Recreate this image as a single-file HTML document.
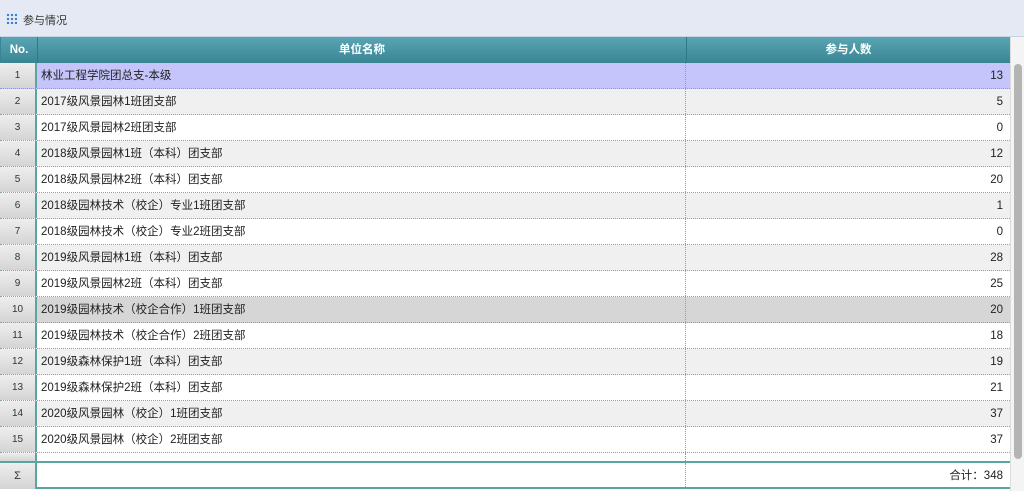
<!DOCTYPE html>
<html><head><meta charset="utf-8"><style>
*{margin:0;padding:0;box-sizing:border-box}
body{width:1024px;height:491px;overflow:hidden;background:#fff;font-family:"Liberation Sans","Noto Sans CJK SC",sans-serif;font-size:11.5px;color:#222;position:relative}
.top{position:absolute;left:0;top:0;width:1024px;height:37px;background:#e4e9f3;border-bottom:1px solid #c8d4e4}
.top .t{position:absolute;left:23px;top:12px;font-size:11px;color:#333}
.top .ic{position:absolute;left:6px;top:13px;width:11px;height:11px;background:
radial-gradient(circle,#3a7fd0 1.2px,transparent 1.3px) 0 0/4px 4px}
.hd{position:absolute;top:37px;left:0;width:1010px;height:26px;background:linear-gradient(#5aa5b4,#3a8594);color:#fff;font-weight:bold;border-left:1px solid #3a8594}
.hd div{position:absolute;top:0;height:26px;line-height:26px;text-align:center;border-right:1px solid #2e7888}
.row{position:absolute;left:0;width:1010px;height:26px;border-bottom:1px dotted #7aa8b0}
.row div{position:absolute;top:0;height:25px;line-height:26px;white-space:nowrap}
.n{left:0;width:37px;text-align:center;font-size:10px;color:#333;background:linear-gradient(#eee,#d4d4d4);border-right:2px solid #5aa5a0}
.c1{left:37px;width:649px;padding-left:4px;border-right:1px dotted #7aa8b0}
.c2{left:686px;width:324px;text-align:right;padding-right:7px}
.sb{position:absolute;left:1010px;top:37px;width:14px;height:454px;background:#f4f4f4;border-left:1px solid #ddd}
.th{position:absolute;left:1014px;top:64px;width:8px;height:395px;background:#b4b4b4;border-radius:4px}
.ft{position:absolute;left:0;top:461px;width:1010px;height:28px;border-top:2px solid #5aa5a0;border-bottom:2px solid #5aa5a0}
.ft div{position:absolute;top:0;height:26px;line-height:26px}
</style></head><body>
<div class="top"><span class="ic"></span><span class="t">参与情况</span></div>
<div class="hd"><div style="left:0;width:37px">No.</div><div style="left:37px;width:649px">单位名称</div><div style="left:686px;width:323px;border-right:none">参与人数</div></div>
<div class="row" style="top:63px;background:#c5c5fb"><div class="n">1</div><div class="c1">林业工程学院团总支-本级</div><div class="c2">13</div></div>
<div class="row" style="top:89px;background:#f0f0f0"><div class="n">2</div><div class="c1">2017级风景园林1班团支部</div><div class="c2">5</div></div>
<div class="row" style="top:115px"><div class="n">3</div><div class="c1">2017级风景园林2班团支部</div><div class="c2">0</div></div>
<div class="row" style="top:141px;background:#f0f0f0"><div class="n">4</div><div class="c1">2018级风景园林1班（本科）团支部</div><div class="c2">12</div></div>
<div class="row" style="top:167px"><div class="n">5</div><div class="c1">2018级风景园林2班（本科）团支部</div><div class="c2">20</div></div>
<div class="row" style="top:193px;background:#f0f0f0"><div class="n">6</div><div class="c1">2018级园林技术（校企）专业1班团支部</div><div class="c2">1</div></div>
<div class="row" style="top:219px"><div class="n">7</div><div class="c1">2018级园林技术（校企）专业2班团支部</div><div class="c2">0</div></div>
<div class="row" style="top:245px;background:#f0f0f0"><div class="n">8</div><div class="c1">2019级风景园林1班（本科）团支部</div><div class="c2">28</div></div>
<div class="row" style="top:271px"><div class="n">9</div><div class="c1">2019级风景园林2班（本科）团支部</div><div class="c2">25</div></div>
<div class="row" style="top:297px;background:#d6d6d6"><div class="n">10</div><div class="c1">2019级园林技术（校企合作）1班团支部</div><div class="c2">20</div></div>
<div class="row" style="top:323px"><div class="n">11</div><div class="c1">2019级园林技术（校企合作）2班团支部</div><div class="c2">18</div></div>
<div class="row" style="top:349px;background:#f0f0f0"><div class="n">12</div><div class="c1">2019级森林保护1班（本科）团支部</div><div class="c2">19</div></div>
<div class="row" style="top:375px"><div class="n">13</div><div class="c1">2019级森林保护2班（本科）团支部</div><div class="c2">21</div></div>
<div class="row" style="top:401px;background:#f0f0f0"><div class="n">14</div><div class="c1">2020级风景园林（校企）1班团支部</div><div class="c2">37</div></div>
<div class="row" style="top:427px"><div class="n">15</div><div class="c1">2020级风景园林（校企）2班团支部</div><div class="c2">37</div></div>
<div class="row" style="top:453px;height:8px;border:none"><div class="n" style="height:8px"></div><div class="c1" style="height:8px"></div></div>
<div class="ft"><div class="n" style="font-size:11px">Σ</div><div class="c1"></div><div class="c2" style="padding-right:7px">合计：348</div></div>
<div class="sb"></div><div class="th"></div>
</body></html>
